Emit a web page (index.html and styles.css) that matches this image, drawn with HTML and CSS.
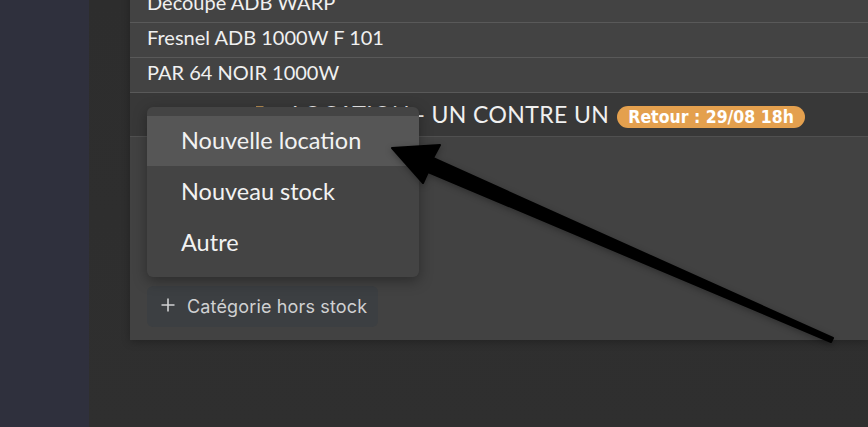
FILE: index.html
```html
<!DOCTYPE html>
<html lang="fr">
<head>
    <meta charset="UTF-8">
    <meta name="viewport" content="width=device-width, initial-scale=1.0">
    <title>Stock</title>
    <link rel="stylesheet" href="styles.css">
</head>
<body>
    <div class="app">
        <aside class="sidebar"></aside>
        <main class="main">
            <section class="panel">
                <ul class="items">
                    <li class="item">Decoupe ADB WARP</li>
                    <li class="item">Fresnel ADB 1000W F 101</li>
                    <li class="item">PAR 64 NOIR 1000W</li>
                    <li class="item group">
                        <svg class="folder" width="22" height="18" viewBox="0 0 22 18">
                            <path d="M1 2h7l2 2h11v13H1z" fill="#b48c52"/>
                        </svg>
                        <span class="group-name">LOCATION - UN CONTRE UN</span>
                        <span class="badge">Retour : 29/08 18h</span>
                    </li>
                </ul>
                <div class="actions">
                    <button class="add-btn">
                        <svg class="plus" width="14" height="14" viewBox="0 0 14 14">
                            <path d="M7 0.5v13M0.5 7h13" stroke="#d0d1d2" stroke-width="1.6" fill="none"/>
                        </svg>
                        Catégorie hors stock
                    </button>
                </div>

                <!-- menu ouvert -->
                <ul class="menu">
                    <li class="menu-item active">Nouvelle location</li>
                    <li class="menu-item">Nouveau stock</li>
                    <li class="menu-item">Autre</li>
                </ul>
            </section>
        </main>

        <svg class="arrow" width="868" height="427" viewBox="0 0 868 427">
            <polygon points="392,148 440,145 433,158 833,338 831,342 428,172 423,183"
                     fill="#000" stroke="#000" stroke-width="2" stroke-linejoin="round"/>
        </svg>
    </div>
</body>
</html>
```

FILE: styles.css
```css
body {
    margin: 0;
    padding: 0;
    background-color: #2f2f2f;
    font-family: Lato, "Open Sans", sans-serif;
    overflow: hidden;
}
.app {
    position: relative;
    display: flex;
    height: 427px;
}
.sidebar {
    width: 89px;
    flex-shrink: 0;
    background-color: #2f303d;
}
.main {
    flex: 1;
    padding-left: 41px;
    background: linear-gradient(#2d2d2d, #2f2f2f);
}
.panel {
    position: relative;
    margin-top: -12px;
    background-color: #424242;
    box-shadow: 0 2px 8px rgba(0, 0, 0, 0.25);
}
.items {
    list-style: none;
    margin: 0;
    padding: 0;
}
.item {
    height: 28px;
    line-height: 28px;
    padding: 0 0 6px 17px;
    font-size: 20px;
    color: #f0f0f0;
    background-color: #434343;
    border-bottom: 1px solid #595959;
}
.item.group {
    display: flex;
    align-items: baseline;
    height: 43px;
    line-height: 43px;
    padding: 0 0 0 125px;
    font-size: 23px;
    background-color: #383838;
    border-bottom: 1px solid #505050;
}
.folder {
    align-self: flex-start;
    margin-top: 11px;
    margin-right: 15px;
}
.group-name {
    letter-spacing: 0.4px;
}
.badge {
    margin-left: 8px;
    padding: 0 11px;
    height: 22px;
    line-height: 22px;
    border-radius: 11px;
    background-color: #e4a04e;
    color: #fff;
    font-family: "DejaVu Sans Condensed", "DejaVu Sans", sans-serif;
    font-weight: bold;
    font-size: 17.5px;
}
.actions {
    padding: 149px 0 13px 17px;
}
.add-btn {
    display: flex;
    align-items: center;
    height: 41px;
    padding: 0 11px 0 14px;
    border: none;
    border-radius: 6px;
    background-color: #3c3f42;
    color: #d0d1d2;
    font-family: Inter, "Noto Sans", sans-serif;
    font-size: 18px;
    letter-spacing: 0.15px;
    cursor: pointer;
}
.add-btn .plus {
    margin-right: 12px;
    margin-top: -3px;
}
.menu {
    position: absolute;
    top: 119px;
    left: 17px;
    width: 272px;
    margin: 0;
    padding: 9px 0 8px;
    list-style: none;
    background-color: #444444;
    border-radius: 6px;
    box-shadow: 0 4px 14px rgba(0, 0, 0, 0.35);
}
.menu-item {
    height: 51px;
    line-height: 49px;
    padding-left: 34px;
    font-size: 23.5px;
    color: #f2f2f2;
}
.menu-item.active {
    height: 50px;
    margin-bottom: 1px;
    background-color: #565656;
}
.arrow {
    position: absolute;
    top: 0;
    left: 0;
    pointer-events: none;
    filter: drop-shadow(0 2px 3px rgba(0, 0, 0, 0.3));
}
```
